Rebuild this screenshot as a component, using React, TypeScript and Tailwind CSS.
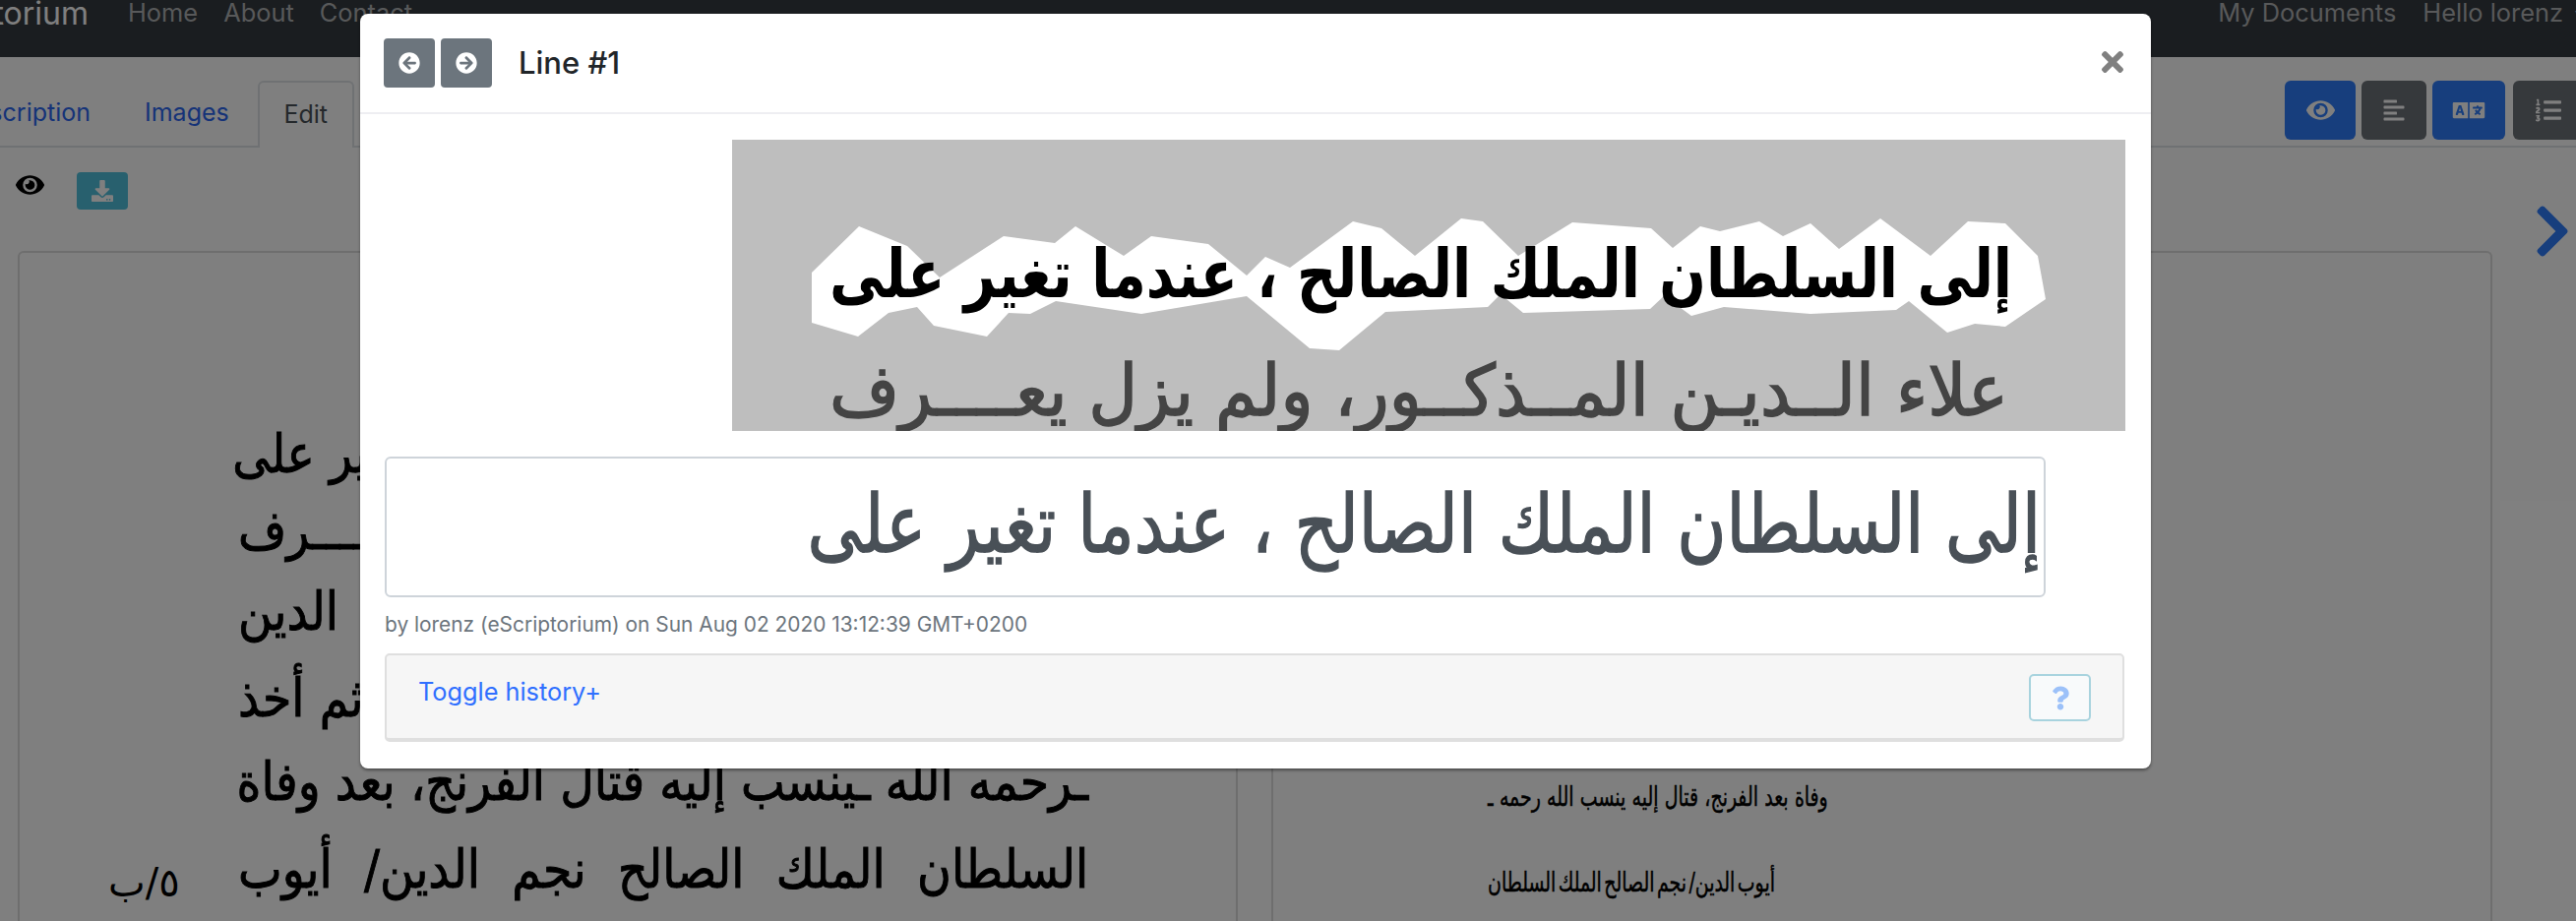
import {
  FaAlignLeft,
  FaArrowCircleLeft,
  FaArrowCircleRight,
  FaChevronRight,
  FaDownload,
  FaEye,
  FaLanguage,
  FaListOl,
  FaQuestion,
  FaTimes,
} from "react-icons/fa"

const maskPoints =
  "825,277 873,230 922,250 955,282 1020,240 1072,247 1093,230 1142,260 1170,240 1228,248 1267,280 1286,261 1311,272 1375,225 1404,232 1438,260 1485,222 1507,225 1543,260 1598,226 1678,232 1700,252 1728,230 1748,235 1788,225 1812,240 1840,227 1869,253 1911,222 1962,260 2000,225 2038,227 2071,260 2079,304 2038,332 2007,329 1979,338 1940,306 1927,315 1840,319 1752,312 1719,321 1700,307 1693,299 1677,314 1548,318 1525,299 1512,312 1408,317 1361,356 1331,354 1267,301 1160,319 1073,306 1047,319 1025,318 1003,342 949,331 932,312 903,318 872,342 825,328"

const arabic = "font-['DejaVu_Sans',sans-serif]"

function Navbar() {
  return (
    <nav className="flex h-[58px] items-start bg-[#343a40] text-[25.4px] leading-[26px] text-[#b0b2b4]">
      <div className="flex w-[90px] justify-end overflow-hidden text-[32px] leading-[28px] whitespace-nowrap text-[#ffffff]">
        eScriptorium
      </div>
      <a className="ml-[40px]">Home</a>
      <a className="ml-[26px]">About</a>
      <a className="ml-[26px]">Contact</a>
      <a className="ml-auto">My Documents</a>
      <a className="ml-[27px]">Hello lorenz</a>
      <span className="mr-[-6px] ml-[12px] text-[14px]">▾</span>
    </nav>
  )
}

function Tabs() {
  return (
    <div className="mt-[24px] flex h-[68px] items-start border-b-2 border-[#dee2e6] text-[25px]">
      <a className="flex h-[66px] w-[92px] items-center justify-end overflow-hidden whitespace-nowrap text-[#2b66f0]">
        Transcription
      </a>
      <a className="ml-[55px] flex h-[66px] items-center text-[#2b66f0]">Images</a>
      <a className="ml-[29px] flex h-[68px] w-[98px] items-center justify-center rounded-t-md border-2 border-b-0 border-[#dee2e6] bg-white text-[#495057]">
        Edit
      </a>
      <div className="mr-[-8px] ml-auto flex gap-[6px]">
        <button className="flex h-[60px] w-[72px] items-center justify-center rounded-md bg-[#2e7cfa] text-white">
          <FaEye className="h-[26px] w-[29px]" />
        </button>
        <button className="flex h-[60px] w-[66px] items-center justify-center rounded-md bg-[#6c7278] text-white">
          <FaAlignLeft className="h-[24px] w-[24px]" />
        </button>
        <button className="flex h-[60px] w-[74px] items-center justify-center rounded-md bg-[#2e7cfa] text-white">
          <FaLanguage className="h-[26px] w-[34px]" />
        </button>
        <button className="ml-[2px] flex h-[60px] w-[72px] items-center justify-center rounded-md bg-[#6c7278] text-white">
          <FaListOl className="h-[26px] w-[26px]" />
        </button>
      </div>
    </div>
  )
}

function Toolbar() {
  return (
    <div className="mt-[25px] flex h-[80px] items-start">
      <FaEye className="ml-[16px] h-[26px] w-[29px] text-[#000]" />
      <button className="ml-[33px] flex h-[38px] w-[52px] items-center justify-center rounded-[4px] bg-[#50c0dc] text-white">
        <FaDownload className="h-[22px] w-[22px]" />
      </button>
      <FaChevronRight className="mt-[30px] mr-[5px] ml-auto h-[60px] w-[38px] text-[#2e7cfa]" />
    </div>
  )
}

function Panels() {
  return (
    <div className="flex">
      <div className={`relative ml-[18px] h-[690px] w-[1240px] rounded-t-md border-2 border-b-0 border-[#dcdcdc] pt-[163px] pl-[222px] text-[54px] text-black [-webkit-text-stroke:1px] ${arabic}`}>
        <div className="w-[982px] origin-left scale-x-[0.88]">
          <p dir="rtl" className="h-[78px] leading-[84px] whitespace-nowrap [text-align-last:justify]">
            إلى السلطان الملك الصالح ، عندما تغير على
          </p>
          <p dir="rtl" className="h-[82px] leading-[84px] whitespace-nowrap [text-align-last:justify]">
            علاء الــديـن المــذكــور، ولم يزل يعــــرف
          </p>
          <p dir="rtl" className="h-[88px] text-left leading-[84px]">الدين</p>
          <p dir="rtl" className="h-[85px] text-left leading-[84px]">ثم أخذ</p>
          <p dir="rtl" className="h-[89px] leading-[84px] whitespace-nowrap [text-align-last:justify]">
            ـرحمه الله ـينسب إليه قتال الفرنج، بعد وفاة
          </p>
          <p dir="rtl" className="leading-[84px] whitespace-nowrap [text-align-last:justify]">
            السلطان الملك الصالح نجم الدين/ أيوب
          </p>
        </div>
        <span dir="rtl" className="absolute top-[610px] left-[90px] text-[40px] [-webkit-text-stroke:0px]">٥/ب</span>
      </div>
      <div className={`ml-[34px] h-[690px] w-[1241px] rounded-t-md border-2 border-b-0 border-[#dcdcdc] pt-[536px] pl-[218px] text-[27px] text-black [-webkit-text-stroke:0.5px] ${arabic}`}>
        <div className="flex h-[87px] w-[494px] origin-left scale-x-[0.7] items-start justify-between leading-[34px]">
          {["ـ", "رحمه", "الله", "ينسب", "إليه", "قتال", "الفرنج،", "بعد", "وفاة"].map((word) => (
            <span key={word} dir="rtl">{word}</span>
          ))}
        </div>
        <div className="flex w-[417px] origin-left scale-x-[0.7] items-start justify-between leading-[34px]">
          {["السلطان", "الملك", "الصالح", "نجم", "الدين/", "أيوب"].map((word) => (
            <span key={word} dir="rtl">{word}</span>
          ))}
        </div>
      </div>
    </div>
  )
}

function LineImage() {
  return (
    <svg viewBox="744 142 1416 296" className="ml-[378px] block h-[296px] w-[1416px] bg-[#bebebe]">
      <polygon points={maskPoints} fill="#fff" />
      <text
        x="2045"
        y="302"
        direction="rtl"
        fontFamily="DejaVu Sans"
        fontSize="68"
        fontWeight="700"
        fill="#000"
        textLength="1202"
        lengthAdjust="spacingAndGlyphs"
      >
        إلى السلطان الملك الصالح ، عندما تغير على
      </text>
      <text
        x="2041"
        y="422"
        direction="rtl"
        fontFamily="DejaVu Sans"
        fontSize="72"
        fill="#444"
        stroke="#444"
        strokeWidth="1.5"
        textLength="1198"
        lengthAdjust="spacingAndGlyphs"
      >
        علاء الــديـن المــذكــور، ولم يزل يعــــرف
      </text>
    </svg>
  )
}

function LineModal() {
  return (
    <div className="absolute inset-0 flex bg-black/50 pt-[14px] pl-[366px]">
      <div className="h-[767px] w-[1820px] rounded-lg bg-white shadow-[0_2px_3px_rgba(0,0,0,0.4)]">
        <div className="flex h-[102px] items-center border-b-2 border-[#eeeef2] pr-[26px] pl-[24px]">
          <button className="flex h-[50px] w-[52px] items-center justify-center rounded-[4px] bg-[#6c757d] text-white">
            <FaArrowCircleLeft className="h-[22px] w-[22px]" />
          </button>
          <button className="ml-[6px] flex h-[50px] w-[52px] items-center justify-center rounded-[4px] bg-[#6c757d] text-white">
            <FaArrowCircleRight className="h-[22px] w-[22px]" />
          </button>
          <h5 className="ml-[27px] text-[31px] font-medium text-[#212529]">Line #1</h5>
          <FaTimes className="mt-[-2px] ml-auto h-[32px] w-[26px] text-[#808080]" />
        </div>
        <div className="pt-[26px]">
          <LineImage />
          <div className="mt-[26px] ml-[25px] h-[143px] w-[1688px] overflow-hidden rounded-[6px] border-2 border-[#ced4da] pt-[11px] pr-[3px]">
            <div
              dir="rtl"
              className={`origin-right scale-x-[0.835] text-[82px] leading-[112px] whitespace-nowrap text-[#495057] [-webkit-text-stroke:1.5px] ${arabic}`}
            >
              إلى السلطان الملك الصالح ، عندما تغير على
            </div>
          </div>
          <p className="mt-[13px] ml-[25px] text-[20.9px] leading-[30px] text-[#6c757d]">
            by lorenz (eScriptorium) on Sun Aug 02 2020 13:12:39 GMT+0200
          </p>
          <div className="mt-[14px] ml-[25px] flex h-[90px] w-[1768px] items-start justify-between rounded-[5px] border-2 border-b-4 border-[#dfdfdf] bg-[#f6f6f6] pt-[18px] pr-[32px] pl-[32px]">
            <a className="text-[25.3px] leading-[38px] text-[#2f6fff]">Toggle history+</a>
            <button className="mt-[1px] flex h-[48px] w-[63px] items-center justify-center rounded-[5px] border-2 border-[#a8d3de] bg-[#f8fafb] text-[#9cc1f9]">
              <FaQuestion className="h-[25px] w-[18px]" />
            </button>
          </div>
        </div>
      </div>
    </div>
  )
}

export default function App() {
  return (
    <div className="relative h-[936px] w-[2618px] overflow-hidden bg-white font-['Inter',sans-serif]">
      <Navbar />
      <Tabs />
      <Toolbar />
      <Panels />
      <LineModal />
    </div>
  )
}
